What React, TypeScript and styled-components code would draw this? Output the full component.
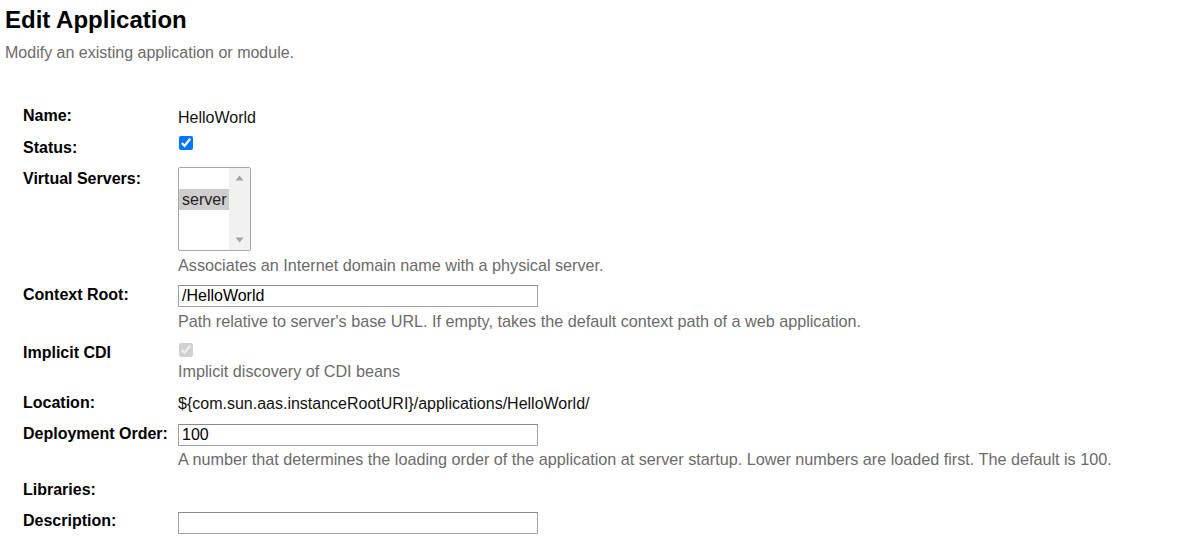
import React from "react";
import styled, { createGlobalStyle } from "styled-components";

const Global = createGlobalStyle`
  html, body { margin: 0; padding: 0; background: #fff; }
  body { font-family: "Liberation Sans", Arial, sans-serif; color: #000; }
`;

const Page = styled.div`
  padding: 6px 0 0 5px;
`;

const Title = styled.h1`
  margin: 0;
  font-size: 24px;
  line-height: 28px;
  font-weight: bold;
  color: #000;
`;

const Subtitle = styled.p`
  margin: 10px 0 0 0;
  font-size: 16px;
  line-height: 18px;
  color: #6b6b6b;
`;

const Form = styled.div`
  margin: 45px 0 0 18px;
  display: flex;
  flex-direction: column;
`;

const Row = styled.div<{ $gap: number }>`
  display: flex;
  align-items: flex-start;
  margin-bottom: ${(p) => p.$gap}px;
`;

const Label = styled.div`
  width: 155px;
  flex: none;
  font-size: 16px;
  line-height: 18px;
  font-weight: bold;
  color: #000;
`;

const Value = styled.div<{ $offset: number }>`
  display: flex;
  flex-direction: column;
  align-items: flex-start;
  margin-top: ${(p) => p.$offset}px;
`;

const Text = styled.div`
  font-size: 16px;
  line-height: 18px;
  color: #111;
`;

const Help = styled.div<{ $top: number }>`
  margin-top: ${(p) => p.$top}px;
  font-size: 16.2px;
  line-height: 18px;
  color: #6b6b6b;
`;

const Check = styled.input.attrs({ type: "checkbox" })`
  width: 14px;
  height: 14px;
  margin: 0 0 0 1px;
  accent-color: #0075ff;
`;

const TextInput = styled.input.attrs({ type: "text" })`
  box-sizing: border-box;
  width: 360px;
  height: 22px;
  margin: 0;
  padding: 0 3px;
  border: 1px solid #a3a3a3;
  border-top-color: #8a8a8a;
  border-radius: 0;
  font-family: "Liberation Sans", Arial, sans-serif;
  font-size: 16px;
  color: #000;
  outline: none;
`;

const ListBox = styled.div`
  box-sizing: border-box;
  width: 73px;
  height: 84px;
  border: 1px solid #a8a8a8;
  border-radius: 2px;
  display: flex;
  overflow: hidden;
  background: #fff;
`;

const Options = styled.div`
  flex: 1;
  display: flex;
  flex-direction: column;
`;

const Option = styled.div<{ $selected?: boolean }>`
  height: 21px;
  padding-left: 3px;
  font-size: 16px;
  line-height: 21px;
  color: #222;
  background: ${(p) => (p.$selected ? "#cecece" : "transparent")};
`;

const Scrollbar = styled.div`
  width: 21px;
  flex: none;
  background: #f1f1f1;
  display: flex;
  flex-direction: column;
  justify-content: space-between;
  align-items: center;
  padding: 7px 0;
  box-sizing: border-box;
`;

const Arrow = ({ up }: { up?: boolean }) => (
  <svg width="9" height="6" viewBox="0 0 9 6">
    <polygon
      points={up ? "0.5,5.5 8.5,5.5 4.5,0.5" : "0.5,0.5 8.5,0.5 4.5,5.5"}
      fill="#a3a3a3"
    />
  </svg>
);

export default function App() {
  return (
    <>
      <Global />
      <Page>
        <Title>Edit Application</Title>
        <Subtitle>Modify an existing application or module.</Subtitle>
        <Form>
          <Row $gap={12}>
            <Label>Name:</Label>
            <Value $offset={2}>
              <Text>HelloWorld</Text>
            </Value>
          </Row>
          <Row $gap={13}>
            <Label>Status:</Label>
            <Value $offset={-3}>
              <Check defaultChecked />
            </Value>
          </Row>
          <Row $gap={12}>
            <Label>Virtual Servers:</Label>
            <Value $offset={-3}>
              <ListBox>
                <Options>
                  <Option>&nbsp;</Option>
                  <Option $selected>server</Option>
                </Options>
                <Scrollbar>
                  <Arrow up />
                  <Arrow />
                </Scrollbar>
              </ListBox>
              <Help $top={5}>Associates an Internet domain name with a physical server.</Help>
            </Value>
          </Row>
          <Row $gap={14}>
            <Label>Context Root:</Label>
            <Value $offset={-1}>
              <TextInput defaultValue="/HelloWorld" />
              <Help $top={5}>
                Path relative to server's base URL. If empty, takes the default context path of a web application.
              </Help>
            </Value>
          </Row>
          <Row $gap={14}>
            <Label>Implicit CDI</Label>
            <Value $offset={-1}>
              <Check defaultChecked disabled />
              <Help $top={5}>Implicit discovery of CDI beans</Help>
            </Value>
          </Row>
          <Row $gap={12}>
            <Label>Location:</Label>
            <Value $offset={1}>
              <Text>{"${com.sun.aas.instanceRootURI}/applications/HelloWorld/"}</Text>
            </Value>
          </Row>
          <Row $gap={13}>
            <Label>Deployment Order:</Label>
            <Value $offset={-1}>
              <TextInput defaultValue="100" />
              <Help $top={4}>
                A number that determines the loading order of the application at server startup. Lower numbers are loaded first. The default is 100.
              </Help>
            </Value>
          </Row>
          <Row $gap={13}>
            <Label>Libraries:</Label>
          </Row>
          <Row $gap={0}>
            <Label>Description:</Label>
            <Value $offset={0}>
              <TextInput defaultValue="" />
            </Value>
          </Row>
        </Form>
      </Page>
    </>
  );
}
